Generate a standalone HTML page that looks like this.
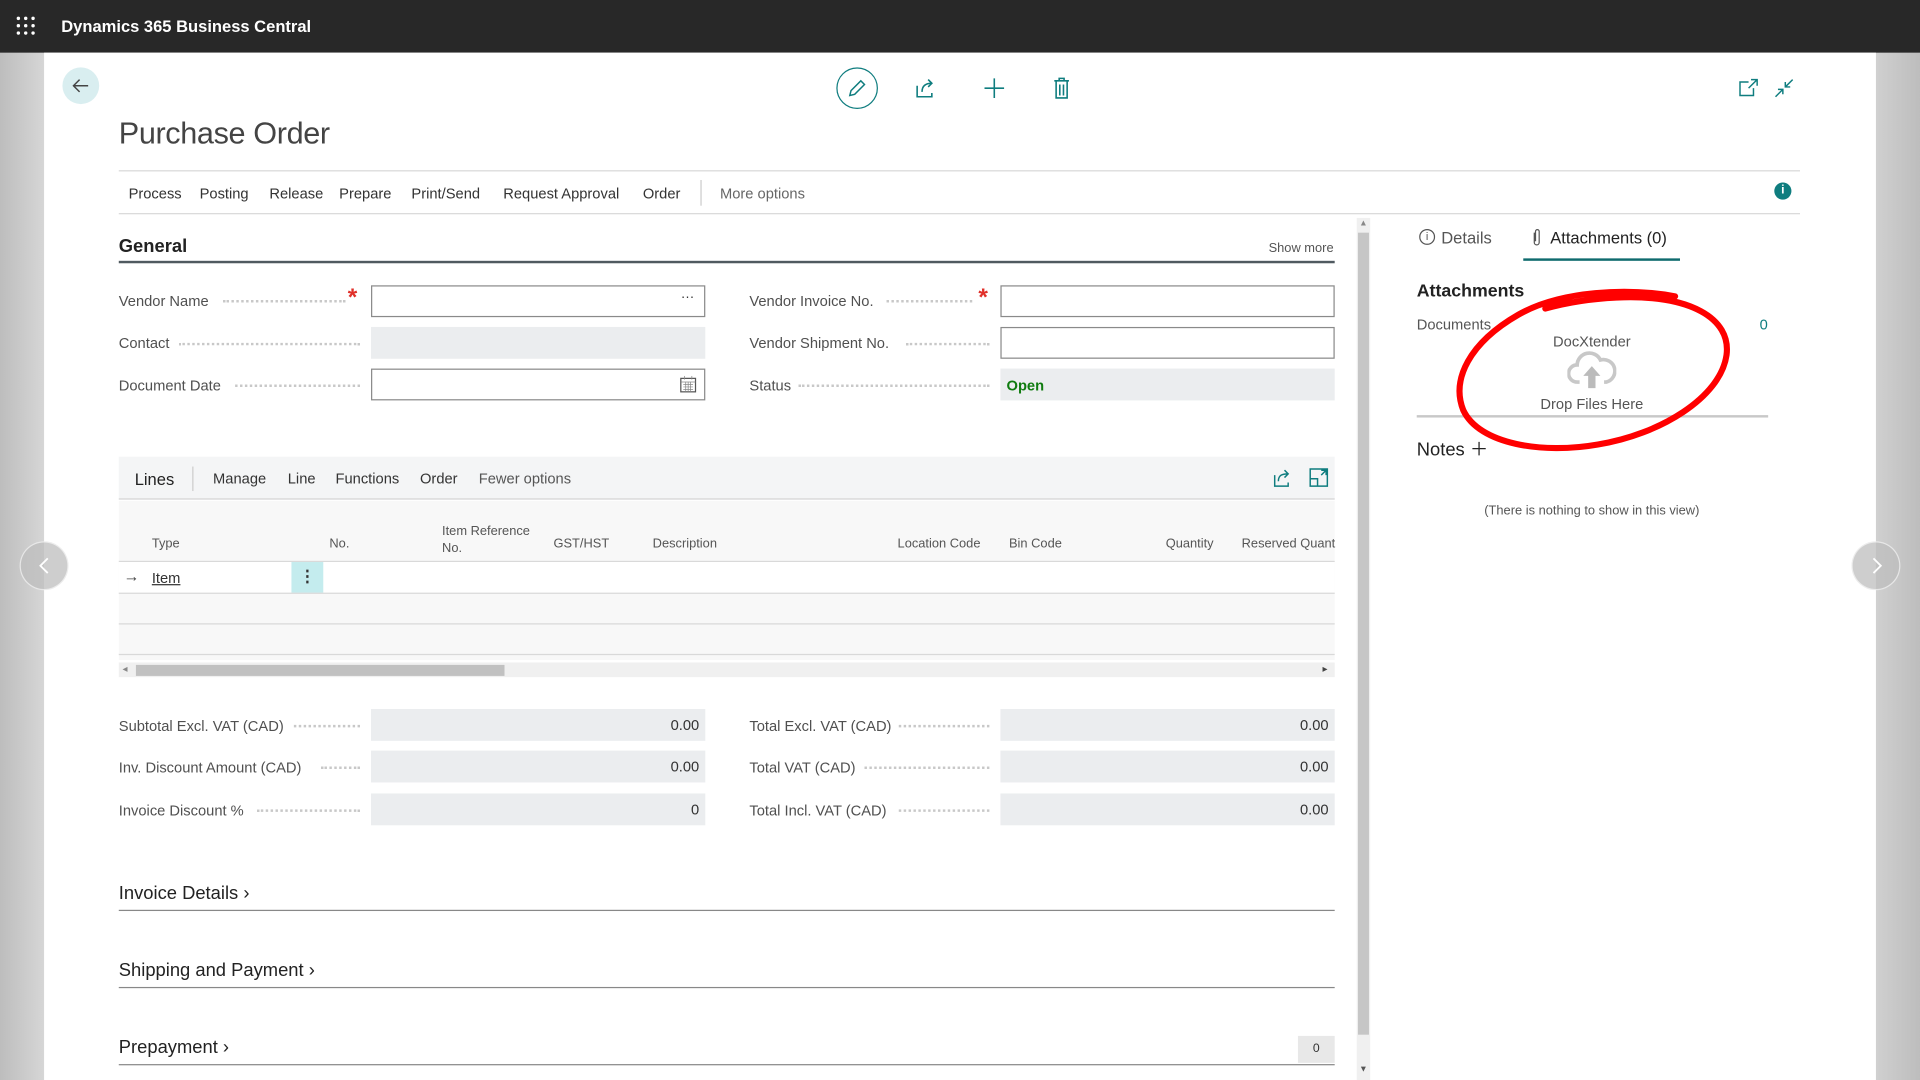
<!DOCTYPE html>
<html><head><meta charset="utf-8"><style>
*{margin:0;padding:0;box-sizing:border-box}
html,body{width:1920px;height:1080px;overflow:hidden;background:#c9c9c9}
#w{position:absolute;left:0;top:0;width:1568px;height:882px;transform:scale(1.22449);transform-origin:0 0;font-family:"Liberation Sans",sans-serif;color:#333;background:linear-gradient(90deg,#bdbdbd,#d6d6d6 36px,#d0d0d0 1532px,#bdbdbd)}
.a{position:absolute;white-space:nowrap}
.top{left:0;top:0;width:1568px;height:43px;background:#282828}
.main{left:36px;top:43px;width:1496px;height:839px;background:#fff}
.lbl{font-size:12px;color:#505050}
.dots{position:absolute;border-bottom:2px dotted #c8c8c8;height:1px}
.inp{position:absolute;height:26px;border:1px solid #8a8a8a;background:#fff}
.ro{position:absolute;height:26px;background:#ebedef}
.val{font-size:12px;color:#333;text-align:right;padding-right:5px;line-height:26px}
.act{font-size:12px;color:#333;top:151px}
.th{font-size:10.5px;color:#555}
.hl{position:absolute;background:#d9d9d9;height:1px}
.sec{font-size:15px;color:#222}
</style></head><body><div id="w">
<div class="a top"></div>
<svg class="a" style="left:13px;top:13px" width="16" height="16"><g fill="#fff"><circle cx="2" cy="2" r="1.4"/><circle cx="8" cy="2" r="1.4"/><circle cx="14" cy="2" r="1.4"/><circle cx="2" cy="8" r="1.4"/><circle cx="8" cy="8" r="1.4"/><circle cx="14" cy="8" r="1.4"/><circle cx="2" cy="14" r="1.4"/><circle cx="8" cy="14" r="1.4"/><circle cx="14" cy="14" r="1.4"/></g></svg>
<div class="a" style="left:50px;top:14px;font-size:13.5px;font-weight:bold;color:#fff">Dynamics 365 Business Central</div>
<div class="a main"></div>
<div class="a" style="left:51px;top:55px;width:30px;height:30px;border-radius:50%;background:#d9eef0"></div>
<svg class="a" style="left:58px;top:62px" width="16" height="16"><path d="M14 8H2M7 3L2 8l5 5" stroke="#444" stroke-width="1.2" fill="none"/></svg>
<div class="a" style="left:683px;top:55px;width:34px;height:34px;border-radius:50%;border:1.5px solid #0f7d7f"></div>
<svg class="a" style="left:692px;top:64px" width="16" height="16"><path d="M11 2l3 3-8 8-4 1 1-4z" stroke="#0f7d7f" stroke-width="1.2" fill="none"/></svg>
<svg class="a" style="left:747px;top:63px" width="18" height="18"><path d="M2 7v9h12v-3M6 12c0-5 3-7 8-7M11 2l3 3-3 3" stroke="#0f7d7f" stroke-width="1.3" fill="none"/></svg>
<svg class="a" style="left:803px;top:63px" width="18" height="18"><path d="M9 1v16M1 9h16" stroke="#0f7d7f" stroke-width="1.3"/></svg>
<svg class="a" style="left:860px;top:63px" width="14" height="18"><path d="M1 3h12M5 3V1h4v2M2.5 3v14h9V3M5.5 6v9M8.5 6v9" stroke="#0f7d7f" stroke-width="1.3" fill="none"/></svg>
<svg class="a" style="left:1420px;top:64px" width="16" height="16"><path d="M8 3H1v11h11V8M10 1h5v5M15 1L8 8" stroke="#0f7d7f" stroke-width="1.2" fill="none"/></svg>
<svg class="a" style="left:1449px;top:64px" width="16" height="16"><path d="M15 1L9 7M9 3v4h4M1 15l6-6M3 9h4v4" stroke="#0f7d7f" stroke-width="1.2" fill="none"/></svg>
<div class="a" style="left:97px;top:95px;font-size:25px;color:#444;font-weight:normal;letter-spacing:-0.3px">Purchase Order</div>
<div class="hl" style="left:97px;top:139px;width:1373px"></div>
<div class="a act" style="left:105px">Process</div><div class="a act" style="left:163px">Posting</div><div class="a act" style="left:220px">Release</div><div class="a act" style="left:277px">Prepare</div><div class="a act" style="left:336px">Print/Send</div><div class="a act" style="left:411px">Request Approval</div><div class="a act" style="left:525px">Order</div>
<div class="a" style="left:572px;top:147px;width:1px;height:21px;background:#ccc"></div>
<div class="a act" style="left:588px;color:#666">More options</div>
<div class="a" style="left:1449px;top:149px;width:14px;height:14px;border-radius:50%;background:#0f7d7f;color:#fff;font-size:10px;font-weight:bold;text-align:center;line-height:14px">i</div>
<div class="hl" style="left:97px;top:174px;width:1373px"></div>
<div class="a" style="left:1108px;top:178px;width:11px;height:704px;background:#f0f0f0"></div>
<div class="a" style="left:1109px;top:190px;width:9px;height:655px;background:#c6c6c6"></div>
<div class="a" style="left:1110px;top:179px;font-size:7px;color:#888">▲</div>
<div class="a" style="left:1110px;top:870px;font-size:7px;color:#555">▼</div>
<div class="a" style="left:97px;top:193px;font-size:15px;font-weight:bold;color:#222">General</div>
<div class="a" style="left:1036px;top:197px;font-size:10.5px;color:#555">Show more</div>
<div class="a" style="left:97px;top:213px;width:993px;height:2px;background:#505a60"></div>
<div class="a lbl" style="left:97px;top:239px">Vendor Name</div><div class="dots" style="left:182px;top:245px;width:100px"></div>
<div class="a" style="left:284px;top:232px;color:#e0302a;font-size:20px;font-weight:bold">*</div>
<div class="inp" style="left:303px;top:233px;width:273px"><span class="a" style="right:8px;top:3px;font-size:11px">···</span></div>
<div class="a lbl" style="left:97px;top:273px">Contact</div><div class="dots" style="left:146px;top:280px;width:148px"></div>
<div class="ro" style="left:303px;top:267px;width:273px"></div>
<div class="a lbl" style="left:97px;top:308px">Document Date</div><div class="dots" style="left:192px;top:314px;width:102px"></div>
<div class="inp" style="left:303px;top:301px;width:273px"></div>
<svg class="a" style="left:555px;top:307px" width="14" height="14"><rect x="1" y="2" width="12" height="11" fill="none" stroke="#555"/><path d="M1 5h12M4 0v3M10 0v3M3 7h8M3 9h8M3 11h8M5 5v8M7 5v8M9 5v8" stroke="#888" stroke-width=".6"/></svg>
<div class="a lbl" style="left:612px;top:239px">Vendor Invoice No.</div><div class="dots" style="left:724px;top:245px;width:70px"></div>
<div class="a" style="left:799px;top:232px;color:#e0302a;font-size:20px;font-weight:bold">*</div>
<div class="inp" style="left:817px;top:233px;width:273px"></div>
<div class="a lbl" style="left:612px;top:273px">Vendor Shipment No.</div><div class="dots" style="left:740px;top:280px;width:68px"></div>
<div class="inp" style="left:817px;top:267px;width:273px"></div>
<div class="a lbl" style="left:612px;top:308px">Status</div><div class="dots" style="left:652px;top:314px;width:156px"></div>
<div class="ro" style="left:817px;top:301px;width:273px"></div>
<div class="a" style="left:822px;top:308px;font-size:12px;font-weight:bold;color:#107c10">Open</div>
<div class="a" style="left:97px;top:373px;width:993px;height:35px;background:#f4f5f6;border-bottom:1px solid #d4d4d4"></div>
<div class="a" style="left:110px;top:384px;font-size:13.5px;color:#222">Lines</div>
<div class="a" style="left:157px;top:381px;width:1px;height:20px;background:#ccc"></div>
<div class="a act" style="left:174px;top:384px">Manage</div><div class="a act" style="left:235px;top:384px">Line</div><div class="a act" style="left:274px;top:384px">Functions</div><div class="a act" style="left:343px;top:384px">Order</div><div class="a act" style="left:391px;top:384px;color:#555">Fewer options</div>
<svg class="a" style="left:1039px;top:382px" width="16" height="16"><path d="M2 6v9h11v-3M5 11c0-5 3-6 8-6M10 2l3 3-3 3" stroke="#0f7d7f" stroke-width="1.2" fill="none"/></svg>
<svg class="a" style="left:1069px;top:382px" width="16" height="16"><path d="M1 1h14v14H1zM1 9h6v6M10 6l4-4M10 2h4v4" stroke="#0f7d7f" stroke-width="1.2" fill="none"/></svg>
<div class="a" style="left:97px;top:409px;width:993px;height:130px;background:#f8f8f8"></div>
<div class="a th" style="left:124px;top:438px">Type</div><div class="a th" style="left:269px;top:438px">No.</div>
<div class="a th" style="left:361px;top:427px;line-height:14px">Item Reference<br>No.</div>
<div class="a th" style="left:452px;top:438px">GST/HST</div><div class="a th" style="left:533px;top:438px">Description</div><div class="a th" style="left:733px;top:438px">Location Code</div><div class="a th" style="left:824px;top:438px">Bin Code</div><div class="a th" style="left:952px;top:438px">Quantity</div><div class="a th" style="left:1014px;top:438px">Reserved Quant</div>
<div class="hl" style="left:97px;top:458px;width:993px"></div>
<div class="a" style="left:97px;top:459px;width:993px;height:25px;background:#fff"></div>
<div class="a" style="left:101px;top:463px;font-size:13px;color:#444">→</div>
<div class="a" style="left:124px;top:465px;font-size:12px;text-decoration:underline">Item</div>
<div class="a" style="left:238px;top:459px;width:26px;height:25px;background:#c4ecee;text-align:center;font-size:13px;line-height:24px;color:#333;font-weight:bold">⋮</div>
<div class="hl" style="left:97px;top:484px;width:993px"></div>
<div class="hl" style="left:97px;top:509px;width:993px"></div>
<div class="hl" style="left:97px;top:534px;width:993px"></div>
<div class="a" style="left:97px;top:541px;width:993px;height:12px;background:#f0f0f0"></div>
<div class="a" style="left:111px;top:543px;width:301px;height:9px;background:#c1c1c1"></div>
<div class="a" style="left:100px;top:542px;font-size:8px;color:#888">◂</div><div class="a" style="left:1080px;top:542px;font-size:8px;color:#444">▸</div>
<div class="a lbl" style="left:97px;top:586px">Subtotal Excl. VAT (CAD)</div><div class="dots" style="left:240px;top:592px;width:54px"></div>
<div class="ro val" style="left:303px;top:579px;width:273px">0.00</div>
<div class="a lbl" style="left:97px;top:620px">Inv. Discount Amount (CAD)</div><div class="dots" style="left:262px;top:626px;width:32px"></div>
<div class="ro val" style="left:303px;top:613px;width:273px">0.00</div>
<div class="a lbl" style="left:97px;top:655px">Invoice Discount %</div><div class="dots" style="left:210px;top:661px;width:84px"></div>
<div class="ro val" style="left:303px;top:648px;width:273px">0</div>
<div class="a lbl" style="left:612px;top:586px">Total Excl. VAT (CAD)</div><div class="dots" style="left:734px;top:592px;width:74px"></div>
<div class="ro val" style="left:817px;top:579px;width:273px">0.00</div>
<div class="a lbl" style="left:612px;top:620px">Total VAT (CAD)</div><div class="dots" style="left:706px;top:626px;width:102px"></div>
<div class="ro val" style="left:817px;top:613px;width:273px">0.00</div>
<div class="a lbl" style="left:612px;top:655px">Total Incl. VAT (CAD)</div><div class="dots" style="left:734px;top:661px;width:74px"></div>
<div class="ro val" style="left:817px;top:648px;width:273px">0.00</div>
<div class="a sec" style="left:97px;top:721px">Invoice Details ›</div><div class="hl" style="left:97px;top:743px;width:993px;background:#888"></div>
<div class="a sec" style="left:97px;top:784px">Shipping and Payment ›</div><div class="hl" style="left:97px;top:806px;width:993px;background:#888"></div>
<div class="a sec" style="left:97px;top:847px">Prepayment ›</div><div class="hl" style="left:97px;top:869px;width:993px;background:#888"></div>
<div class="a" style="left:1060px;top:846px;width:30px;height:22px;background:#e8e8e8;font-size:10px;text-align:center;line-height:22px">0</div>
<div class="a" style="left:1159px;top:187px;width:13px;height:13px;border:1px solid #555;border-radius:50%;font-size:9px;text-align:center;line-height:11px;color:#555">i</div>
<div class="a" style="left:1177px;top:187px;font-size:13.5px;color:#555">Details</div>
<svg class="a" style="left:1251px;top:186px" width="8" height="16"><path d="M2 4v8a2 2 0 0 0 4 0V3a1.5 1.5 0 0 0-3 0v8" stroke="#555" fill="none"/></svg>
<div class="a" style="left:1266px;top:187px;font-size:13.5px;color:#222">Attachments (0)</div>
<div class="a" style="left:1244px;top:211px;width:128px;height:2px;background:#0f6b6e"></div>
<div class="a" style="left:1157px;top:230px;font-size:14.5px;font-weight:bold;color:#222">Attachments</div>
<div class="a" style="left:1157px;top:258px;font-size:12px;color:#555">Documents</div>
<div class="a" style="left:1437px;top:258px;font-size:12px;color:#0f7d7f">0</div>
<div class="a" style="left:1250px;top:272px;width:100px;text-align:center;font-size:12px;color:#555">DocXtender</div>
<svg class="a" style="left:1280px;top:284px" width="40" height="36"><path d="M10 28h-2a7 7 0 0 1 0-14a10 10 0 0 1 19-4a8 8 0 0 1 5 18h-2" stroke="#c8c8c8" stroke-width="3" fill="none"/><path d="M20 15l-7 8h4v10h6V23h4z" fill="#bbb"/></svg>
<div class="a" style="left:1240px;top:323px;width:120px;text-align:center;font-size:12px;color:#555">Drop Files Here</div>
<div class="a" style="left:1157px;top:339px;width:287px;height:2px;background:#c8c8c8"></div>
<div class="a" style="left:1157px;top:356px;font-size:15px;color:#222">Notes ＋</div>
<div class="a" style="left:1150px;top:411px;width:300px;text-align:center;font-size:10.5px;color:#555">(There is nothing to show in this view)</div>
<svg class="a" style="left:1180px;top:225px" width="250" height="150"><path d="M188 17C150 10 95 12 60 32C20 55 5 85 15 110C28 138 80 146 125 138C175 130 225 100 230 65C234 35 200 15 140 18C118 19 100 22 82 27" stroke="#f00" stroke-width="5" fill="none" stroke-linecap="round"/></svg>
<div class="a" style="left:16px;top:442px;width:40px;height:40px;border-radius:50%;background:rgba(190,190,190,.75);border:1px solid rgba(255,255,255,.6)"></div>
<svg class="a" style="left:29px;top:454px" width="14" height="16"><path d="M10 2L4 8l6 6" stroke="#fff" stroke-width="1.5" fill="none"/></svg>
<div class="a" style="left:1512px;top:442px;width:40px;height:40px;border-radius:50%;background:rgba(190,190,190,.75);border:1px solid rgba(255,255,255,.6)"></div>
<svg class="a" style="left:1526px;top:454px" width="14" height="16"><path d="M4 2l6 6-6 6" stroke="#fff" stroke-width="1.5" fill="none"/></svg>
</div></body></html>
